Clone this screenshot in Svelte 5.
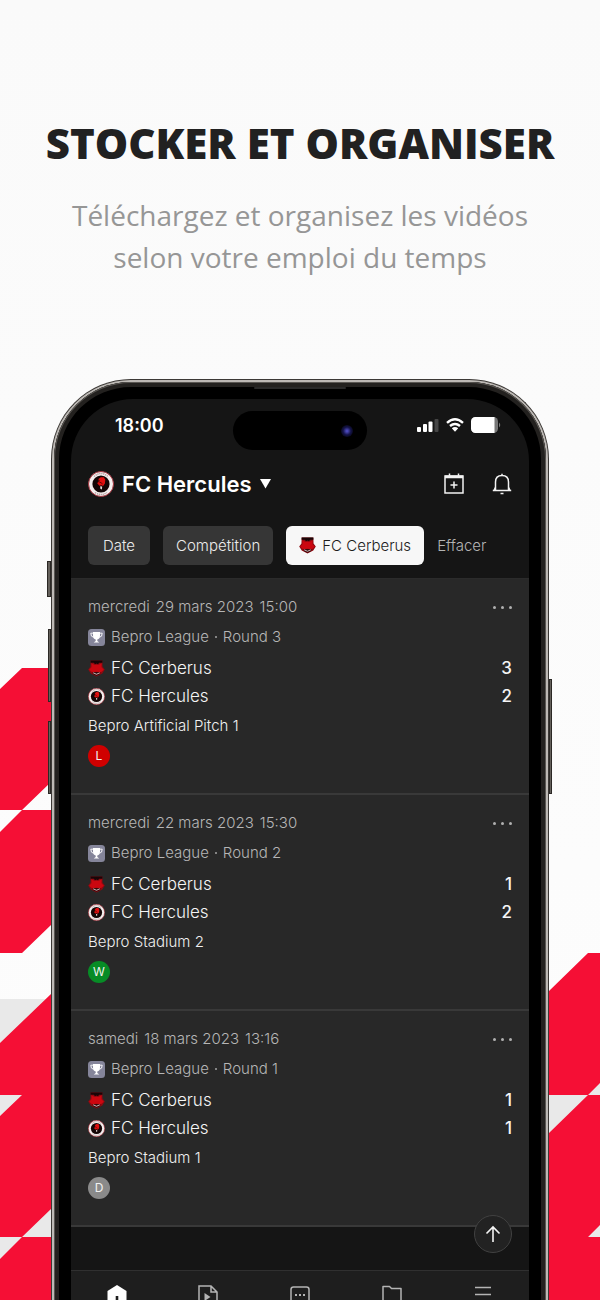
<script>
  const filters = [{ label: "Date" }, { label: "Compétition" }];

  const matches = [
    {
      day: "mercredi",
      date: "29 mars 2023",
      time: "15:00",
      round: "Round 3",
      scores: [3, 2],
      venue: "Bepro Artificial Pitch 1",
      result: "L",
    },
    {
      day: "mercredi",
      date: "22 mars 2023",
      time: "15:30",
      round: "Round 2",
      scores: [1, 2],
      venue: "Bepro Stadium 2",
      result: "W",
    },
    {
      day: "samedi",
      date: "18 mars 2023",
      time: "13:16",
      round: "Round 1",
      scores: [1, 1],
      venue: "Bepro Stadium 1",
      result: "D",
    },
  ];

  const tabs = ["home", "video", "chat", "folder", "menu"];
</script>

{#snippet hercules(size)}
  <svg class="crest" width={size} height={size} viewBox="0 0 26 26" aria-hidden="true">
    <circle cx="13" cy="13" r="12.5" fill="#f4eeee" stroke="#a5323c" />
    <path d="M6 5.500Q13-.5 20 5.500M7 21.500Q13 25.500 19 21.500" fill="none" stroke="#6d4a4a" stroke-width="1.400" stroke-dasharray="1.200 .8" opacity=".5" />
    <circle cx="13" cy="13" r="8.600" fill="#140606" />
    <path d="M10.500 8l2.200-1.800 3.200.1 1.400 2.400-.4 3.800-1.800 2.600-1.700-.9-2.100.5-2.200-2.600 1.600-1z" fill="#e01010" />
    <path d="M11.300 11.200l2 .5 1.100 1.500M10 9.300l2 .7" fill="none" stroke="#4a0505" stroke-width=".8" />
    <path d="M12.200 15.200l2 .3-.3 3-1.500-.8z" fill="#e9dede" />
  </svg>
{/snippet}

{#snippet cerberus()}
  <svg class="crest" width="17" height="17" viewBox="0 0 18 18" aria-hidden="true">
    <path d="M2.800.6h12.400l.2 6.400 2.400 3-2.700 4.200L9 17.600l-6.100-3.400L.2 10l2.400-3z" fill="#8d0a10" />
    <path d="M3.600 3.400L6.400 5h5.200l2.800-1.600-.1 4.400 2.500 2.600-3.200 2.600L9 12.400l-4.600.6-3.200-2.600 2.500-2.600z" fill="#cb0710" />
    <path d="M2.800.6h12.400v2.200L11.800 3 10.600 4.400 9 3.600 7.400 4.400 6.200 3l-3.400-.2z" fill="#190507" />
    <path d="M4.600 13.200L9 12.800l4.400.4-1 1.800L9 16.800 5.600 15z" fill="#30090b" />
    <path d="M5.500 13.600Q9 16.600 12.500 13.600" fill="none" stroke="#e6d4d4" stroke-width=".9" />
  </svg>
{/snippet}

<main class="page">
  <div class="band"></div>
  <svg class="stripes left" width="51" height="632" viewBox="0 668 51 632" aria-hidden="true">
    <path d="M0 689L22 668H51V782L22 810H0zM22 810H51V925L22 953H0V832zM51 994V1209L22 1237H0V1116L22 1095H0V1043zM22 1237H51V1300H0V1259z" />
  </svg>
  <svg class="stripes right" width="51" height="632" viewBox="549 668 51 632" aria-hidden="true">
    <path d="M549 991L588 953H600V1083L588 1095H549zM588 1095H600V1225L588 1237H600V1300H549V1133z" />
  </svg>

  <header class="intro">
    <h1>STOCKER ET ORGANISER</h1>
    <p>Téléchargez et organisez les vidéos<br />selon votre emploi du temps</p>
  </header>

  <div class="phone">
    <span class="key mute"></span>
    <span class="key up"></span>
    <span class="key down"></span>
    <span class="key power"></span>
    <span class="speaker"></span>
    <div class="bezel">
      <div class="screen">
        <div class="island"><span class="camera"></span></div>

        <div class="status">
          <span class="clock">18:00</span>
          <div class="signals">
            <svg width="22" height="16" viewBox="0 0 22 16" fill="#fff" aria-hidden="true">
              <rect x="0" y="10" width="4" height="5" rx="1" />
              <rect x="6" y="7" width="4" height="8" rx="1" />
              <rect x="11.5" y="4.5" width="4" height="10.5" rx="1" />
              <rect x="17.5" y="2" width="4" height="13" rx="1" fill="#454545" />
            </svg>
            <svg width="18" height="16" viewBox="0 0 18 16" fill="none" stroke="#fff" stroke-width="2.4" aria-hidden="true">
              <path d="M1 5.8Q9-1.2 17 5.8M4 9Q9 4.8 14 9" />
              <path d="M5.8 11.2Q9 8.6 12.2 11.2L9 14.8z" fill="#fff" stroke="none" />
            </svg>
            <svg width="30" height="16" viewBox="0 0 30 16" aria-hidden="true">
              <rect width="27" height="16" rx="4.5" fill="#777" />
              <path d="M4.500 0H23.500V16H4.500A4.500 4.500 0 0 1 0 11.500V4.500A4.500 4.500 0 0 1 4.500 0z" fill="#fff" />
              <path d="M28 5.500Q30.500 8 28 10.500z" fill="#777" />
            </svg>
          </div>
        </div>

        <div class="team-bar">
          <button class="team-select">
            {@render hercules(26)}
            <span>FC Hercules</span>
            <svg width="11" height="10" viewBox="0 0 11 10" aria-hidden="true"><path d="M0 0H11L5.500 9.500z" fill="#fff" /></svg>
          </button>
          <div class="tools">
            <button aria-label="Calendrier">
              <svg width="20" height="22" viewBox="0 0 20 22" fill="none" stroke="#f2f2f2" stroke-width="1.500" aria-hidden="true">
                <path d="M1 3H19V20H1zM5.500 .5V4M14.500 .5V4M10 8.500V15.500M6.500 12H13.500" />
                <path d="M1 3.800H19" stroke-width="2.800" />
              </svg>
            </button>
            <button aria-label="Notifications">
              <svg width="20" height="22" viewBox="0 0 20 22" fill="none" stroke="#f2f2f2" stroke-width="1.500" aria-hidden="true">
                <path d="M.8 17.500H19.200M3.500 17.500V9Q3.500 2.500 10 2.500T16.500 9V17.500M10 .8V2.500M8.500 20.600H11.500M3.500 14L2 17.500M16.500 14L18 17.500" />
              </svg>
            </button>
          </div>
        </div>

        <div class="filters">
          {#each filters as filter}
            <button class="chip">{filter.label}</button>
          {/each}
          <button class="chip active">{@render cerberus()}FC Cerberus</button>
          <button class="clear">Effacer</button>
        </div>

        <div class="matches">
          {#each matches as match}
            <article class="match">
              <div class="when">
                <span>{match.day}</span>
                <span>{match.date}</span>
                <span>{match.time}</span>
                <button class="more" aria-label="Plus"><i></i><i></i><i></i></button>
              </div>
              <div class="league">
                <svg width="17" height="17" viewBox="0 0 17 17" aria-hidden="true">
                  <rect width="17" height="17" rx="3.500" fill="#85859a" />
                  <path d="M5 3H12V6.500Q12 10 9.300 10.400V12L11.300 13.500H5.700L7.700 12V10.400Q5 10 5 6.500z" fill="#fff" />
                  <path d="M5 4.200H2.800Q2.700 8 5.700 8.300M12 4.200H14.200Q14.300 8 11.300 8.300" fill="none" stroke="#fff" stroke-width=".9" />
                </svg>
                <span>Bepro League</span>
                <span class="dot"></span>
                <span>{match.round}</span>
              </div>
              <div class="teams">
                <div class="team">
                  {@render cerberus()}
                  <span>FC Cerberus</span>
                  <b>{match.scores[0]}</b>
                </div>
                <div class="team">
                  {@render hercules(17)}
                  <span>FC Hercules</span>
                  <b>{match.scores[1]}</b>
                </div>
              </div>
              <div class="venue">{match.venue}</div>
              <span class="result {match.result}">{match.result}</span>
            </article>
          {/each}
        </div>

        <div class="list-end">
          <button class="to-top" aria-label="Haut de page">
            <svg width="16" height="18" viewBox="0 0 16 18" fill="none" stroke="#f5f5f5" stroke-width="1.600" aria-hidden="true">
              <path d="M8 17V2M1.500 8.500L8 2L14.500 8.500" />
            </svg>
          </button>
        </div>

        <nav class="tabs">
          {#each tabs as tab}
            <a href="#{tab}" aria-label={tab}>
              <svg width="20" height="24" viewBox="0 0 20 24" fill="none" stroke="#b4b4b4" stroke-width="1.500" aria-hidden="true">
                {#if tab === "home"}
                  <path d="M10 0L19.500 6V22H.5V6z" fill="#fff" stroke="none" />
                  <path d="M10 11V18" stroke="#1e1e1e" stroke-width="2.600" />
                {:else if tab === "video"}
                  <path d="M13 1H1V21H19V7zM13 1V7H19" />
                  <path d="M6.500 8V16L12.500 12z" fill="#b4b4b4" stroke="none" />
                {:else if tab === "chat"}
                  <path d="M3.500 2H16.500Q19 2 19 4.500V17Q19 19 16.500 19H3.500Q1 19 1 17V4.500Q1 2 3.500 2z" />
                  <path d="M5 10H7M9 10H11M13 10H15" stroke-width="2" />
                {:else if tab === "folder"}
                  <path d="M1 19V1.500H7.500L9.500 3.500H19V19z" stroke-linejoin="round" />
                {:else}
                  <path d="M2 2.500H18M2 9.500H18M2 16.500H18" />
                {/if}
              </svg>
            </a>
          {/each}
        </nav>
      </div>
    </div>
  </div>
</main>

<style>
  :global(body) {
    margin: 0;
    background: #fafafa;
  }

  button {
    padding: 0;
    border: 0;
    background: none;
    color: inherit;
    font: inherit;
    cursor: pointer;
  }

  svg {
    display: block;
    flex: none;
  }

  .page {
    position: relative;
    box-sizing: border-box;
    height: 100vh;
    padding-top: 116px;
    overflow: hidden;
    background: linear-gradient(#fafafa, #fdfdfd);
  }

  .band {
    position: absolute;
    top: 999px;
    right: 0;
    bottom: 0;
    left: 0;
    background: #e9e9e9;
  }

  .stripes {
    position: absolute;
    top: 668px;
    fill: #f50f35;
  }

  .stripes.left {
    left: 0;
  }

  .stripes.right {
    right: 0;
  }

  .intro {
    margin-bottom: 101px;
    font-family: "Open Sans", sans-serif;
    text-align: center;
  }

  h1 {
    margin: 0 0 24px;
    color: #212121;
    font-size: 42px;
    font-weight: 800;
    line-height: 54px;
  }

  .intro p {
    margin: 0;
    color: #969696;
    font-size: 28px;
    line-height: 42px;
  }

  .phone {
    position: relative;
    margin: 0 51px;
    padding: 2px;
    border: 1px solid #3c3936;
    border-bottom: 0;
    border-radius: 80px 80px 0 0;
    background: #bdb9b5;
    font-family: Inter, sans-serif;
  }

  .bezel {
    padding: 17px 17px 0;
    border-radius: 77px 77px 0 0;
    background: #000;
    box-shadow: inset 0 0 0 1px #5a5753, inset 0 0 0 5px #23211f;
  }

  .key {
    position: absolute;
    left: -4px;
    width: 3px;
    box-sizing: border-box;
    border: 1px solid #2b2825;
    background: #65615c;
  }

  .key.mute {
    top: 181px;
    left: -5px;
    width: 4px;
    height: 36px;
  }

  .key.up {
    top: 249px;
    height: 73px;
  }

  .key.down {
    top: 341px;
    height: 73px;
  }

  .key.power {
    top: 299px;
    right: -4px;
    left: auto;
    height: 115px;
  }

  .speaker {
    position: absolute;
    top: 7px;
    left: 50%;
    width: 92px;
    height: 2px;
    margin-left: -46px;
    border-radius: 2px;
    background: #292929;
  }

  .screen {
    position: relative;
    overflow: hidden;
    border-radius: 62px 62px 0 0;
    background: #151515;
    color: #e6e6e6;
  }

  .island {
    position: absolute;
    top: 12px;
    left: 50%;
    width: 134px;
    height: 39px;
    margin-left: -67px;
    border-radius: 20px;
    background: #000;
  }

  .camera {
    position: absolute;
    top: 14px;
    right: 14px;
    width: 12px;
    height: 12px;
    border-radius: 50%;
    background: radial-gradient(#4a48b8 10%, #15144a 45%, #07071a 75%);
  }

  .status {
    display: flex;
    align-items: center;
    justify-content: space-between;
    height: 52px;
    padding: 0 28px 0 44px;
  }

  .clock {
    color: #fff;
    font-size: 18px;
    font-weight: 600;
  }

  .signals {
    display: flex;
    gap: 7px;
  }

  .team-bar {
    display: flex;
    align-items: center;
    justify-content: space-between;
    height: 66px;
    padding: 0 17px;
  }

  .team-select {
    display: flex;
    align-items: center;
    gap: 8px;
    color: #fff;
    font-size: 22px;
    font-weight: 600;
  }

  .tools {
    display: flex;
    gap: 28px;
  }

  .filters {
    display: flex;
    align-items: center;
    gap: 13px;
    padding: 9px 17px 13px;
    font-size: 15px;
    font-weight: 300;
  }

  .chip {
    display: flex;
    align-items: center;
    justify-content: center;
    gap: 6px;
    min-width: 62px;
    height: 39px;
    padding: 0 13px;
    border-radius: 6px;
    background: #363636;
    color: #ececec;
    white-space: nowrap;
  }

  .chip.active {
    background: #f7f7f7;
    color: #1c1c1c;
  }

  .clear {
    color: #b4b4b4;
  }

  .matches {
    border-top: 1px solid #2b2b2b;
    font-weight: 300;
  }

  .match {
    padding: 13px 17px 26px;
    border-bottom: 2px solid #393939;
    background: #282828;
  }

  .when,
  .league {
    display: flex;
    align-items: center;
    gap: 6px;
    color: #b6b6b6;
    font-size: 15px;
    line-height: 30px;
  }

  .dot {
    width: 2px;
    height: 2px;
    border-radius: 50%;
    background: #a3a3a3;
  }

  .more {
    display: flex;
    gap: 5px;
    margin-left: auto;
  }

  .more i {
    width: 3px;
    height: 3px;
    border-radius: 50%;
    background: #b0b0b0;
  }

  .teams {
    margin-top: 2px;
    color: #f5f5f5;
    font-size: 17px;
    line-height: 28px;
  }

  .team {
    display: flex;
    align-items: center;
    gap: 6px;
  }

  .team b {
    margin-left: auto;
    font-weight: 500;
  }

  .venue {
    margin: 4px 0 7px;
    color: #f0f0f0;
    font-size: 15px;
    line-height: 24px;
  }

  .result {
    display: block;
    width: 22px;
    border-radius: 50%;
    color: #f2f2f2;
    font-size: 12px;
    font-weight: 400;
    line-height: 22px;
    text-align: center;
  }

  .result.L {
    background: #d00000;
  }

  .result.W {
    background: #078c26;
  }

  .result.D {
    background: #8a8a8a;
  }

  .list-end {
    position: relative;
    height: 43px;
  }

  .to-top {
    position: absolute;
    top: -12px;
    right: 17px;
    display: flex;
    align-items: center;
    justify-content: center;
    box-sizing: border-box;
    width: 38px;
    height: 38px;
    border: 1px solid #414141;
    border-radius: 50%;
    background: #222;
  }

  .tabs {
    display: flex;
    height: 80px;
    border-top: 1px solid #303030;
    background: #1e1e1e;
  }

  .tabs a {
    display: flex;
    flex: 1;
    justify-content: center;
    padding-top: 14px;
  }
</style>
